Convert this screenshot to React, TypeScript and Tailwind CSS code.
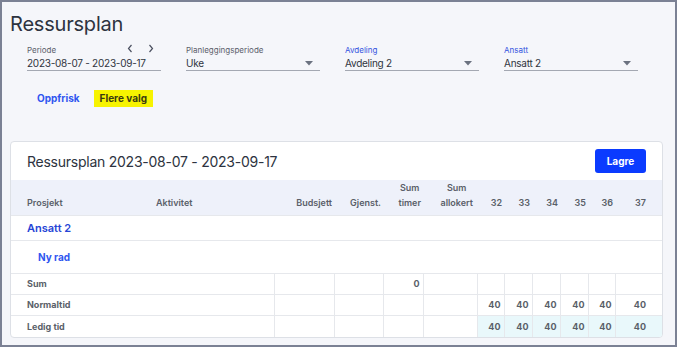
import React from 'react';

const weeks = ['32', '33', '34', '35', '36', '37'];

const Caret = () => (
  <svg width="8" height="5" viewBox="0 0 8 5" className="shrink-0">
    <path d="M0 0 L8 0 L4 4.5 Z" fill="#6b7280" />
  </svg>
);

const Field = ({
  label,
  value,
  active,
  select,
  arrows,
}: {
  label: string;
  value: string;
  active?: boolean;
  select?: boolean;
  arrows?: boolean;
}) => (
  <div className="w-[134px] flex flex-col">
    <div className="flex items-center h-[12px]">
      <span className={`text-[8px] ${active ? 'text-[#3454e0]' : 'text-[#5b606b]'}`}>{label}</span>
      {arrows && (
        <div className="ml-auto mr-[7px] -mt-[4px] flex gap-[15px] text-[#4b5060]">
          <svg width="6" height="9" viewBox="0 0 6 9"><path d="M4.5 1 L1.5 4.5 L4.5 8" stroke="currentColor" strokeWidth="1.2" fill="none" /></svg>
          <svg width="6" height="9" viewBox="0 0 6 9"><path d="M1.5 1 L4.5 4.5 L1.5 8" stroke="currentColor" strokeWidth="1.2" fill="none" /></svg>
        </div>
      )}
    </div>
    <div className="flex items-center justify-between h-[15px] border-b border-[#a4a8b2] pr-[7px]">
      <span className="text-[10px] tracking-[-0.25px] text-[#2f3440] whitespace-nowrap">{value}</span>
      {select && <Caret />}
    </div>
  </div>
);

export default function App() {
  const cell = 'border-r border-[#e6e8ec]';
  return (
    <div className="w-[677px] h-[347px] border-2 border-[#7b8194] bg-[#f5f6fa] px-2 font-['Inter',sans-serif] overflow-hidden">
      <h1 className="text-[20px] tracking-[-0.2px] text-[#2d3340] pt-[8px] leading-[28px]">Ressursplan</h1>

      <div className="flex gap-[25px] ml-[17px] mt-[6px]">
        <Field label="Periode" value="2023-08-07 - 2023-09-17" arrows />
        <Field label="Planleggingsperiode" value="Uke" select />
        <Field label="Avdeling" value="Avdeling 2" select active />
        <Field label="Ansatt" value="Ansatt 2" select active />
      </div>

      <div className="flex items-center ml-[25px] mt-[19px] h-[17px] gap-[12px]">
        <button className="text-[10px] font-bold text-[#2f55f0] px-[2px]">Oppfrisk</button>
        <button className="text-[10px] font-bold text-[#3a3a10] bg-[#f7f300] px-[6px] h-[17px]">Flere valg</button>
      </div>

      <div className="mt-[34px] w-[653px] bg-white border border-[#dde0e6] rounded-[4px] overflow-hidden">
        <div className="flex items-center justify-between h-[38px] pl-4 pr-4">
          <span className="text-[14px] tracking-[-0.25px] text-[#2d3340]">Ressursplan 2023-08-07 - 2023-09-17</span>
          <button className="h-[24px] w-[51px] rounded-[3px] bg-[#0b3bff] text-white text-[10px] font-bold">Lagre</button>
        </div>

        <table className="w-[651px] table-fixed border-collapse text-[#5a5f69]">
          <colgroup>
            <col className="w-[136px]" />
            <col className="w-[127px]" />
            <col className="w-[60px]" />
            <col className="w-[49px]" />
            <col className="w-[40px]" />
            <col className="w-[54px]" />
            <col className="w-[27px]" />
            <col className="w-[28px]" />
            <col className="w-[28px]" />
            <col className="w-[28px]" />
            <col className="w-[27px]" />
            <col className="w-[47px]" />
          </colgroup>
          <thead>
            <tr className="h-[35px] bg-[#eef1fa] text-[9px] leading-[15px] border-b border-[#e6e8ec]">
              <th className="text-left align-bottom pb-[5px] pl-4 font-semibold">Prosjekt</th>
              <th className="text-left align-bottom pb-[5px] pl-[9px] font-semibold">Aktivitet</th>
              <th className="text-right align-bottom pb-[5px] pr-[2px] font-semibold">Budsjett</th>
              <th className="text-right align-bottom pb-[5px] pr-[2px] font-semibold">Gjenst.</th>
              <th className="text-right align-bottom pb-[5px] pr-[2px] font-semibold">
                <div className="text-center w-fit ml-auto">Sum<br />timer</div>
              </th>
              <th className="text-right align-bottom pb-[5px] pr-[4px] font-semibold">
                <div className="text-center w-fit ml-auto">Sum<br />allokert</div>
              </th>
              {weeks.map((w, i) => (
                <th key={w} className={`text-right align-bottom pb-[5px] font-semibold ${i === 5 ? 'pr-4' : 'pr-[2px]'}`}>{w}</th>
              ))}
            </tr>
          </thead>
          <tbody className="text-[9px] font-bold">
            <tr className="h-[25px] border-b border-[#e6e8ec]">
              <td colSpan={12} className="pl-4 text-[11px] font-semibold text-[#2645d6]">Ansatt 2</td>
            </tr>
            <tr className="h-[33px] border-b border-[#e6e8ec]">
              <td colSpan={12} className="pl-[27px] text-[10px] text-[#2f55f0]">Ny rad</td>
            </tr>
            <tr className="h-[21px] border-b border-[#e6e8ec]">
              <td colSpan={2} className={`pl-4 ${cell}`}>Sum</td>
              <td className={cell}></td>
              <td className={cell}></td>
              <td className={`${cell} text-right pr-[3px]`}>0</td>
              <td className={cell}></td>
              {weeks.map((w, i) => (
                <td key={w} className={i < 5 ? cell : ''}></td>
              ))}
            </tr>
            <tr className="h-[21px] border-b border-[#e6e8ec]">
              <td colSpan={2} className={`pl-4 ${cell}`}>Normaltid</td>
              <td className={cell}></td>
              <td className={cell}></td>
              <td className={cell}></td>
              <td className={cell}></td>
              {weeks.map((w, i) => (
                <td key={w} className={`text-right ${i < 5 ? `${cell} pr-[3px]` : 'pr-4'}`}>40</td>
              ))}
            </tr>
            <tr className="h-[21px]">
              <td colSpan={2} className={`pl-4 ${cell}`}>Ledig tid</td>
              <td className={cell}></td>
              <td className={cell}></td>
              <td className={cell}></td>
              <td className={cell}></td>
              {weeks.map((w, i) => (
                <td key={w} className={`text-right bg-[#e9f8fb] ${i < 5 ? `${cell} pr-[3px]` : 'pr-4'}`}>40</td>
              ))}
            </tr>
          </tbody>
        </table>
      </div>
    </div>
  );
}
